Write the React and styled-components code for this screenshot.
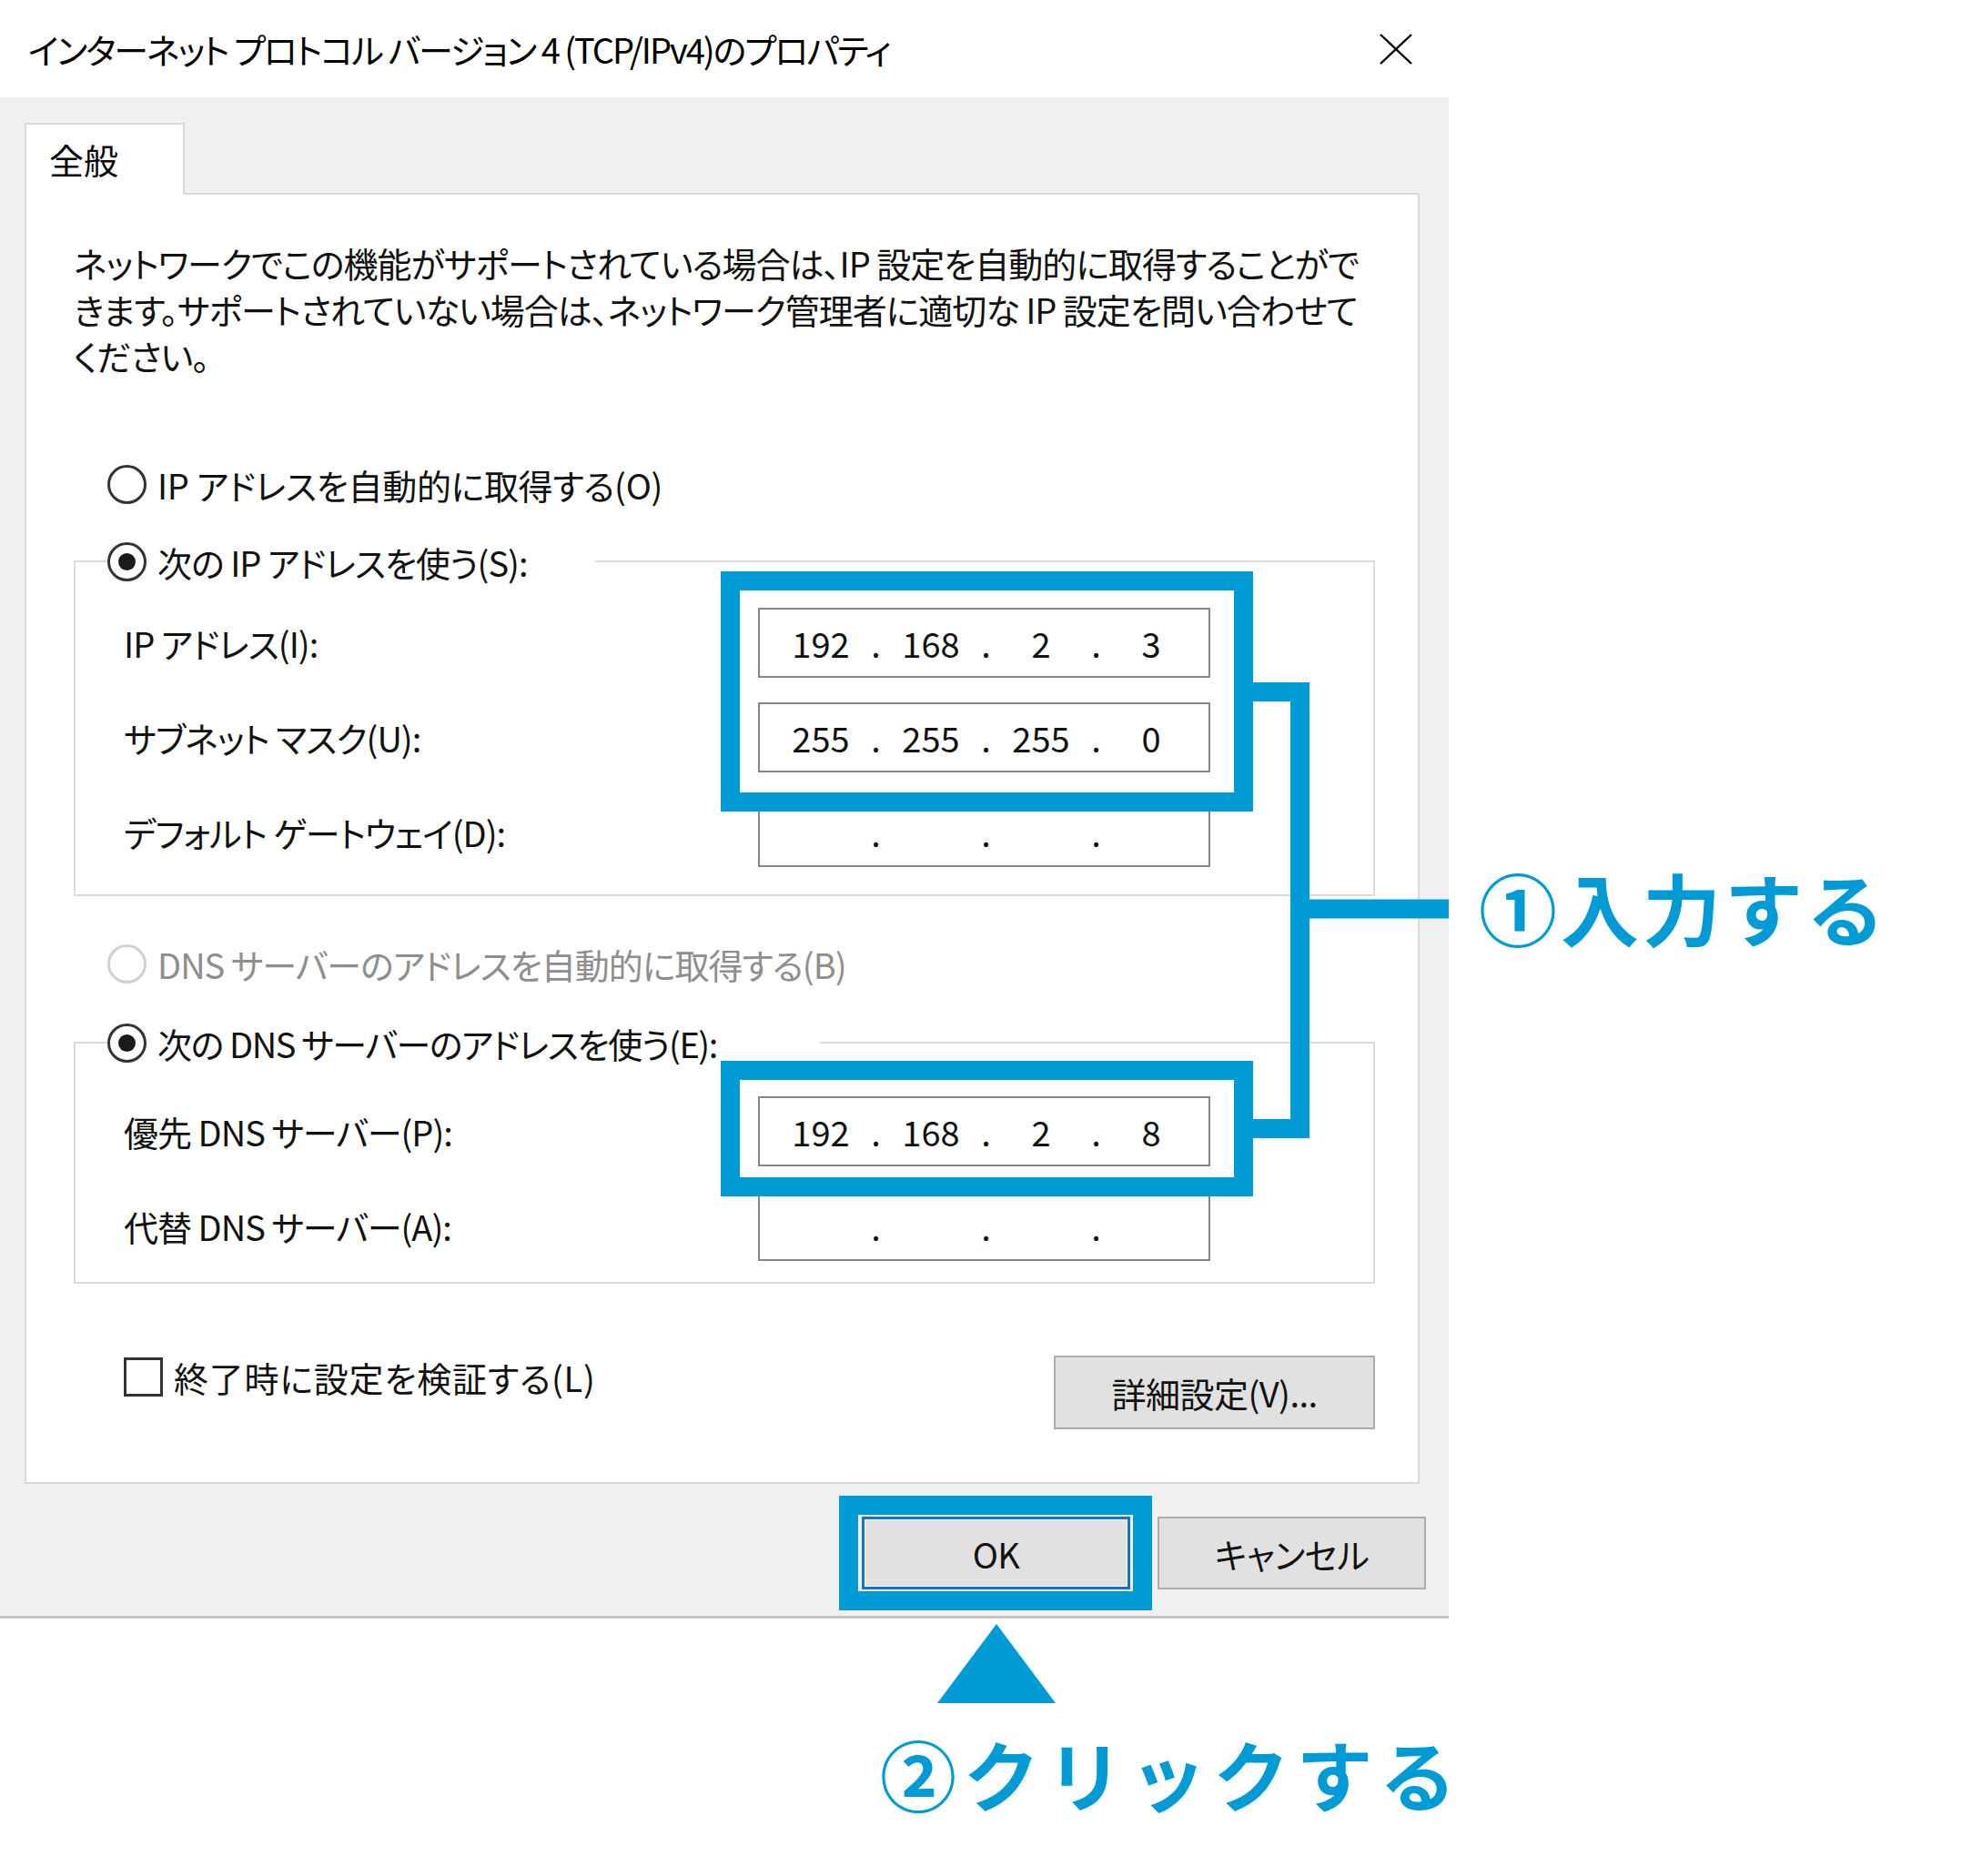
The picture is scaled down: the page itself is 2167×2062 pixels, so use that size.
import styled, { createGlobalStyle } from "styled-components"

const BLUE = "#009ad5"

const GlobalStyle = createGlobalStyle`
  html, body {
    margin: 0;
    padding: 0;
    background: #fff;
  }
  body {
    font-family: "Noto Sans CJK JP", "Noto Sans", sans-serif;
  }
`

const Page = styled.div`
  position: relative;
  width: 2167px;
  height: 2062px;
  background: #fff;
  font-family: "Noto Sans CJK JP", "Noto Sans", sans-serif;
  font-feature-settings: "palt";
  color: #111;
  overflow: hidden;
`

const Dialog = styled.div`
  width: 1592px;
  display: flex;
  flex-direction: column;
`

const TitleBar = styled.div`
  height: 107px;
  box-sizing: border-box;
  padding: 0 40px 0 31px;
  display: flex;
  align-items: center;
  justify-content: space-between;
  background: #fff;
`

const Title = styled.div`
  font-size: 38px;
  letter-spacing: -2px;
  white-space: nowrap;
  color: #000;
`

const Body = styled.div`
  background: #f0f0f0;
  padding: 28px 25px 29px 27px;
  border-bottom: 3px solid #c6c6c6;
  display: flex;
  flex-direction: column;
`

const Tab = styled.div`
  position: relative;
  z-index: 1;
  width: 176px;
  height: 79px;
  box-sizing: border-box;
  margin-bottom: -2px;
  padding: 12px 0 0 25px;
  background: #fff;
  border: 2px solid #d9d9d9;
  border-bottom: none;
  font-size: 38px;
  line-height: 52px;
  color: #000;
`

const Panel = styled.div`
  margin-right: 7px;
  background: #fff;
  border: 2px solid #d9d9d9;
  padding: 49px 47px 58px 52px;
  display: flex;
  flex-direction: column;
`

const Description = styled.p`
  margin: 0;
  font-size: 38px;
  line-height: 51px;
  letter-spacing: -1px;
  white-space: nowrap;
`

const OptionRow = styled.div`
  display: flex;
  align-items: center;
  gap: 12px;
  height: 46px;
  margin-left: ${(p) => p.$ml ?? 0}px;
  margin-top: ${(p) => p.$mt ?? 0}px;
  font-size: 38px;
  letter-spacing: ${(p) => p.$ls ?? -1}px;
  white-space: nowrap;
  color: ${(p) => (p.$disabled ? "#8e8e8e" : "#111")};
`

const Radio = styled.span`
  flex: none;
  width: 43px;
  height: 43px;
  box-sizing: border-box;
  border-radius: 50%;
  border: 3px solid ${(p) => (p.$disabled ? "#d0d0d0" : "#333")};
  background: #fff;
  display: grid;
  place-items: center;

  &::after {
    content: "";
    display: ${(p) => (p.$checked ? "block" : "none")};
    width: 19px;
    height: 19px;
    border-radius: 50%;
    background: #1a1a1a;
  }
`

const Check = styled.span`
  flex: none;
  width: 43px;
  height: 43px;
  box-sizing: border-box;
  border: 3px solid #333;
  background: #fff;
`

const Group = styled.fieldset`
  margin: ${(p) => p.$mt}px 0 0;
  padding: 0;
  min-width: 0;
  border: 2px solid #dcdcdc;
`

const Legend = styled.legend`
  margin-left: 35px;
  padding: 0 ${(p) => p.$pr}px 0 0;
`

const FieldGrid = styled.div`
  display: grid;
  grid-template-columns: 1fr 497px;
  row-gap: 27px;
  align-items: center;
  padding: ${(p) => p.$pt}px 179px ${(p) => p.$pb}px 53px;
`

const FieldLabel = styled.div`
  font-size: 38px;
  letter-spacing: -1px;
  white-space: nowrap;
`

const IpBox = styled.div`
  height: 77px;
  box-sizing: border-box;
  border: 2px solid #868686;
  background: #fff;
  padding-left: 17px;
  display: flex;
  align-items: center;
  font-size: 38px;
`

const Octet = styled.span`
  width: 100px;
  text-align: center;
`

const Dot = styled.span`
  width: 21px;
  text-align: center;
`

const BottomRow = styled.div`
  margin-top: 79px;
  display: flex;
  align-items: flex-start;
  justify-content: space-between;
`

const Button = styled.button`
  width: ${(p) => p.$w}px;
  height: ${(p) => p.$h}px;
  box-sizing: border-box;
  margin: 0;
  padding: 0;
  font-family: inherit;
  font-feature-settings: "palt";
  font-size: 38px;
  letter-spacing: -0.5px;
  color: #111;
  background: #e1e1e1;
  border: ${(p) => (p.$primary ? "3px solid #1272d6" : "2px solid #adadad")};
  box-shadow: ${(p) => (p.$primary ? "inset 0 0 0 1px #fff" : "none")};
`

const ButtonRow = styled.div`
  margin-top: 36px;
  display: flex;
  justify-content: flex-end;
  gap: 30px;
`

const Overlay = styled.svg`
  position: absolute;
  left: 0;
  top: 0;
  pointer-events: none;
`

const Callout = styled.div`
  position: absolute;
  left: ${(p) => p.$x}px;
  top: ${(p) => p.$y}px;
  font-size: ${(p) => p.$size}px;
  letter-spacing: ${(p) => p.$ls}px;
  line-height: 1;
  font-weight: 700;
  font-feature-settings: normal;
  color: ${BLUE};
  white-space: nowrap;
`

function Ip({ value }) {
  const parts = value ? value.split(".") : ["", "", "", ""]
  return (
    <IpBox>
      {parts.map((part, i) => [
        <Octet key={"o" + i}>{part}</Octet>,
        i < 3 ? <Dot key={"d" + i}>.</Dot> : null,
      ])}
    </IpBox>
  )
}

function CloseIcon() {
  return (
    <svg width="36" height="34" viewBox="0 0 36 34">
      <path d="M1 1 L35 33 M35 1 L1 33" stroke="#000" strokeWidth="2.4" fill="none" />
    </svg>
  )
}

export default function App() {
  return (
    <Page>
      <GlobalStyle />
      <Dialog>
        <TitleBar>
          <Title>インターネット プロトコル バージョン 4 (TCP/IPv4)のプロパティ</Title>
          <CloseIcon />
        </TitleBar>
        <Body>
          <Tab>全般</Tab>
          <Panel>
            <Description>
              ネットワークでこの機能がサポートされている場合は、IP 設定を自動的に取得することがで
              <br />
              きます。サポートされていない場合は、ネットワーク管理者に適切な IP 設定を問い合わせて
              <br />
              ください。
            </Description>

            <OptionRow $ml={37} $mt={93} $ls={-0.3}>
              <Radio />
              IP アドレスを自動的に取得する(O)
            </OptionRow>

            <Group $mt={39}>
              <Legend $pr={74}>
                <OptionRow>
                  <Radio $checked />
                  次の IP アドレスを使う(S):
                </OptionRow>
              </Legend>
              <FieldGrid $pt={28} $pb={30}>
                <FieldLabel>IP アドレス(I):</FieldLabel>
                <Ip value="192.168.2.3" />
                <FieldLabel>サブネット マスク(U):</FieldLabel>
                <Ip value="255.255.255.0" />
                <FieldLabel>デフォルト ゲートウェイ(D):</FieldLabel>
                <Ip />
              </FieldGrid>
            </Group>

            <OptionRow $ml={37} $mt={51} $disabled>
              <Radio $disabled />
              DNS サーバーのアドレスを自動的に取得する(B)
            </OptionRow>

            <Group $mt={41}>
              <Legend $pr={113}>
                <OptionRow $ls={-1.4}>
                  <Radio $checked />
                  次の DNS サーバーのアドレスを使う(E):
                </OptionRow>
              </Legend>
              <FieldGrid $pt={36} $pb={23}>
                <FieldLabel>優先 DNS サーバー(P):</FieldLabel>
                <Ip value="192.168.2.8" />
                <FieldLabel>代替 DNS サーバー(A):</FieldLabel>
                <Ip />
              </FieldGrid>
            </Group>

            <BottomRow>
              <OptionRow $ml={55} $ls={0.8}>
                <Check />
                終了時に設定を検証する(L)
              </OptionRow>
              <Button $w={353} $h={81}>詳細設定(V)...</Button>
            </BottomRow>
          </Panel>

          <ButtonRow>
            <Button $w={295} $h={80} $primary>OK</Button>
            <Button $w={295} $h={80}>キャンセル</Button>
          </ButtonRow>
        </Body>
      </Dialog>

      <Overlay width="2167" height="2062" viewBox="0 0 2167 2062">
        <g fill="none" stroke={BLUE} strokeWidth="21" strokeLinejoin="miter">
          <rect x="802.5" y="638.5" width="564" height="243" />
          <rect x="802.5" y="1176.5" width="564" height="128" />
          <rect x="932.5" y="1654.5" width="323" height="105" />
          <path d="M1377 760.5 H1428.5 V1240.5 H1377" />
          <path d="M1428.5 999 H1592" />
        </g>
        <polygon points="1095,1785 1030,1872 1160,1872" fill={BLUE} />
      </Overlay>

      <Callout $x={1625} $y={954} $size={86} $ls={4}>①入力する</Callout>
      <Callout $x={967} $y={1907} $size={84} $ls={7.5}>②クリックする</Callout>
    </Page>
  )
}
